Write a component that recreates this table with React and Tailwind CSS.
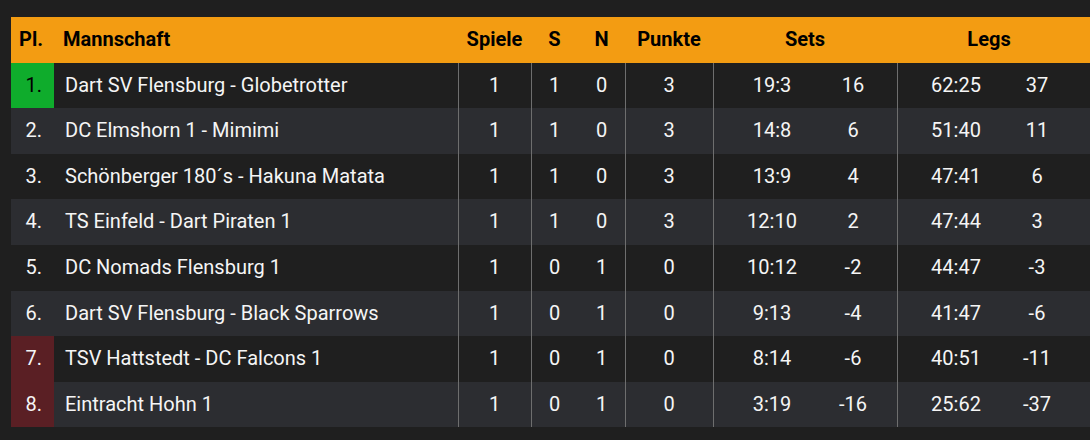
import React from 'react';

const rows = [
  { pl: 1, team: 'Dart SV Flensburg - Globetrotter', spiele: 1, s: 1, n: 0, punkte: 3, sets: '19:3', setDiff: 16, legs: '62:25', legDiff: 37, mark: 'up' },
  { pl: 2, team: 'DC Elmshorn 1 - Mimimi', spiele: 1, s: 1, n: 0, punkte: 3, sets: '14:8', setDiff: 6, legs: '51:40', legDiff: 11 },
  { pl: 3, team: 'Schönberger 180´s - Hakuna Matata', spiele: 1, s: 1, n: 0, punkte: 3, sets: '13:9', setDiff: 4, legs: '47:41', legDiff: 6 },
  { pl: 4, team: 'TS Einfeld - Dart Piraten 1', spiele: 1, s: 1, n: 0, punkte: 3, sets: '12:10', setDiff: 2, legs: '47:44', legDiff: 3 },
  { pl: 5, team: 'DC Nomads Flensburg 1', spiele: 1, s: 0, n: 1, punkte: 0, sets: '10:12', setDiff: -2, legs: '44:47', legDiff: -3 },
  { pl: 6, team: 'Dart SV Flensburg - Black Sparrows', spiele: 1, s: 0, n: 1, punkte: 0, sets: '9:13', setDiff: -4, legs: '41:47', legDiff: -6 },
  { pl: 7, team: 'TSV Hattstedt - DC Falcons 1', spiele: 1, s: 0, n: 1, punkte: 0, sets: '8:14', setDiff: -6, legs: '40:51', legDiff: -11, mark: 'down' },
  { pl: 8, team: 'Eintracht Hohn 1', spiele: 1, s: 0, n: 1, punkte: 0, sets: '3:19', setDiff: -16, legs: '25:62', legDiff: -37, mark: 'down' },
];

const sep = 'shadow-[inset_1px_0_0_#6e6e6e]';

export default function App() {
  return (
    <div className="min-h-[440px] w-[1090px] overflow-hidden bg-[#1f1f1f] pt-[17px] pl-[11px] font-['Roboto',sans-serif] text-[20px] leading-[21.6px]">
      <table className="w-[1079px] table-fixed border-separate border-spacing-0">
        <colgroup>
          <col className="w-[43px]" />
          <col className="w-[404px]" />
          <col className="w-[73px]" />
          <col className="w-[47px]" />
          <col className="w-[47px]" />
          <col className="w-[88px]" />
          <col className="w-[118px]" />
          <col className="w-[66px]" />
          <col className="w-[118px]" />
          <col className="w-[66px]" />
          <col className="w-[9px]" />
        </colgroup>
        <thead>
          <tr className="bg-[#f39c12] font-bold text-black">
            <th className="py-3 pr-[11px] text-right font-bold">Pl.</th>
            <th className="py-3 pl-[9px] text-left font-bold">Mannschaft</th>
            <th className="py-3 text-center font-bold">Spiele</th>
            <th className="py-3 text-center font-bold">S</th>
            <th className="py-3 text-center font-bold">N</th>
            <th className="py-3 text-center font-bold">Punkte</th>
            <th colSpan={2} className="py-3 text-center font-bold">Sets</th>
            <th colSpan={2} className="py-3 text-center font-bold">Legs</th>
            <th className="py-3" />
          </tr>
        </thead>
        <tbody>
          {rows.map((r, i) => (
            <tr key={r.pl} className={i % 2 === 0 ? 'bg-[#1f1f1f] text-[#f5f5f5]' : 'bg-[#2c2d31] text-[#f5f5f5]'}>
              <td
                className={
                  'py-3 pr-3 text-right ' +
                  (r.mark === 'up' ? 'bg-[#0fac2c] text-black' : r.mark === 'down' ? 'bg-[#5a1f24]' : '')
                }
              >
                {r.pl}.
              </td>
              <td className="truncate py-3 pl-[11px]">{r.team}</td>
              <td className={`py-3 text-center ${sep}`}>{r.spiele}</td>
              <td className={`py-3 text-center ${sep}`}>{r.s}</td>
              <td className="py-3 text-center">{r.n}</td>
              <td className={`py-3 text-center ${sep}`}>{r.punkte}</td>
              <td className={`py-3 text-center ${sep}`}>{r.sets}</td>
              <td className="py-3 pr-[22px] text-center">{r.setDiff}</td>
              <td className={`py-3 text-center ${sep}`}>{r.legs}</td>
              <td className="py-3 pr-[22px] text-center">{r.legDiff}</td>
              <td className="py-3" />
            </tr>
          ))}
        </tbody>
      </table>
    </div>
  );
}
